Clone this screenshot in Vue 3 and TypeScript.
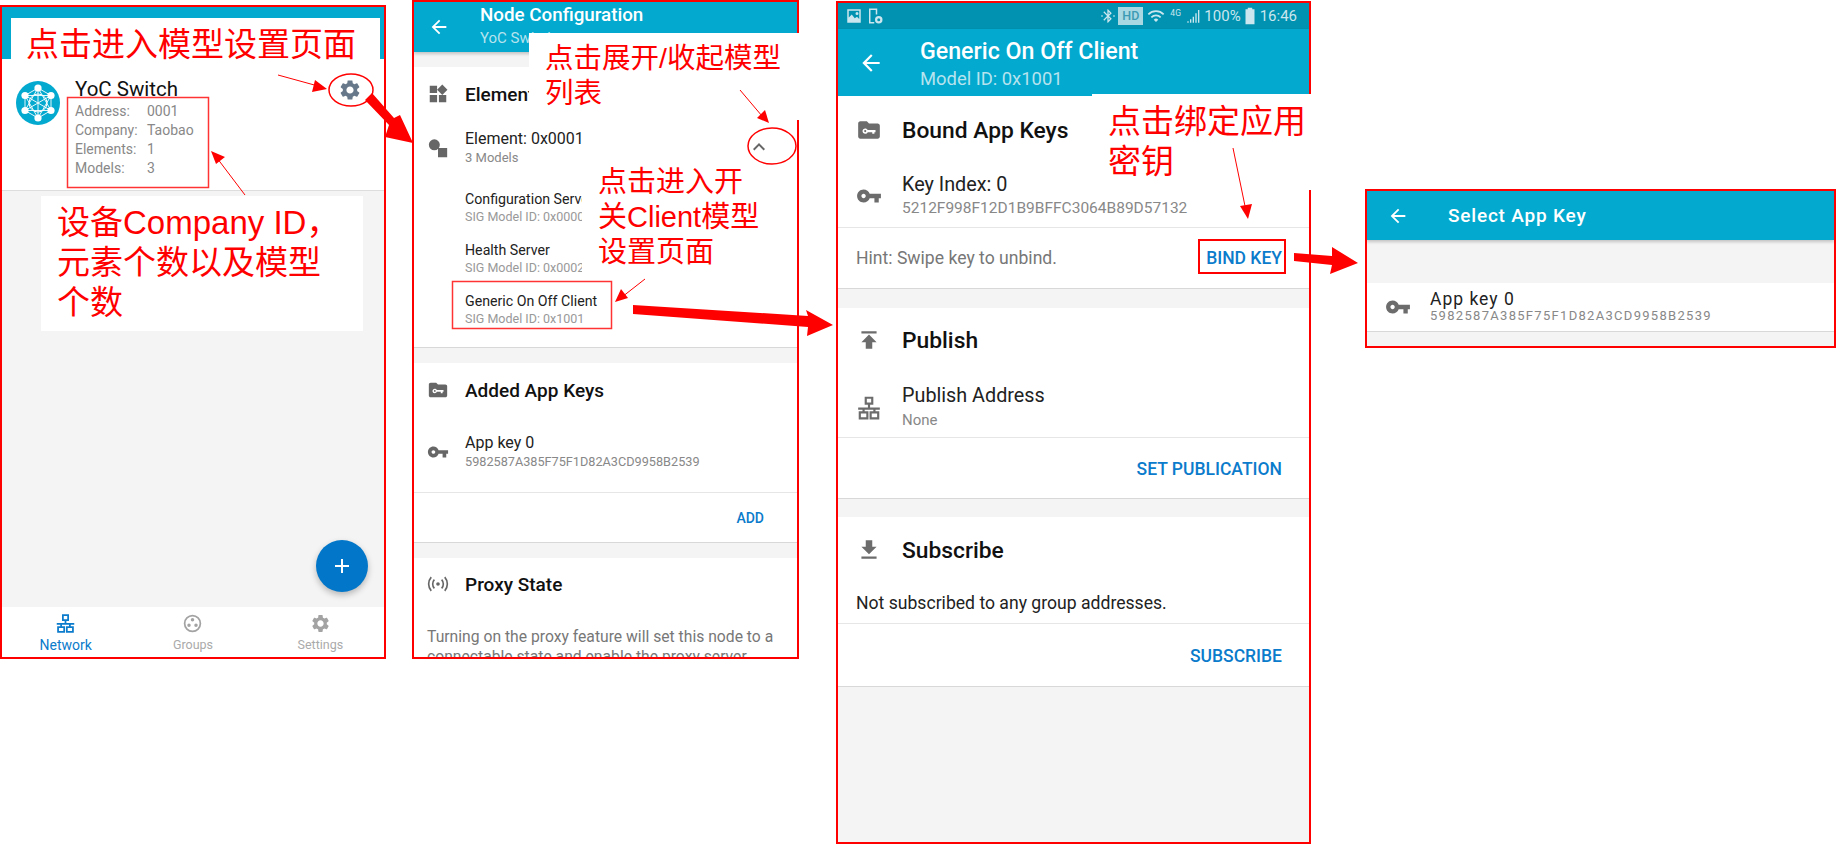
<script setup lang="ts">
const icons: Record<string, string> = {
  back: 'M20 11H7.83l5.59-5.59L12 4l-8 8 8 8 1.41-1.41L7.83 13H20v-2z',
  gear: 'M19.14 12.94c.04-.3.06-.61.06-.94 0-.32-.02-.64-.07-.94l2.03-1.58c.18-.14.23-.41.12-.61l-1.92-3.32c-.12-.22-.37-.29-.59-.22l-2.39.96c-.5-.38-1.03-.7-1.62-.94l-.36-2.54c-.04-.24-.24-.41-.48-.41h-3.84c-.24 0-.43.17-.47.41l-.36 2.54c-.59.24-1.13.57-1.62.94l-2.39-.96c-.22-.08-.47 0-.59.22L2.74 8.87c-.12.21-.08.47.12.61l2.03 1.58c-.05.3-.09.63-.09.94s.02.64.07.94l-2.03 1.58c-.18.14-.23.41-.12.61l1.92 3.32c.12.22.37.29.59.22l2.39-.96c.5.38 1.03.7 1.62.94l.36 2.54c.05.24.24.41.48.41h3.84c.24 0 .44-.17.47-.41l.36-2.54c.59-.24 1.13-.56 1.62-.94l2.39.96c.22.08.47 0 .59-.22l1.92-3.32c.12-.22.07-.47-.12-.61l-2.01-1.58zM12 15.6c-1.98 0-3.6-1.62-3.6-3.6s1.62-3.6 3.6-3.6 3.6 1.62 3.6 3.6-1.62 3.6-3.6 3.6z',
  key: 'M12.65 10C11.83 7.67 9.61 6 7 6c-3.31 0-6 2.69-6 6s2.69 6 6 6c2.61 0 4.83-1.67 5.65-4H17v4h4v-4h2v-4H12.65zM7 14c-1.1 0-2-.9-2-2s.9-2 2-2 2 .9 2 2-.9 2-2 2z',
  folderKey: 'M10 4H4c-1.1 0-2 .9-2 2v12c0 1.1.9 2 2 2h16c1.1 0 2-.9 2-2V8c0-1.1-.9-2-2-2h-8l-2-2zM8.5 10.5c1 0 1.9.6 2.3 1.5H18v2h-1v1.5h-2V14h-4.2c-.4.9-1.3 1.5-2.3 1.5-1.4 0-2.5-1.1-2.5-2.5s1.1-2.5 2.5-2.5zm0 1.5a1 1 0 1 0 0 2 1 1 0 0 0 0-2z',
  widgets: 'M13 13v8h8v-8h-8zM3 21h8v-8H3v8zM3 3v8h8V3H3zm13.66-1.31L11 7.34 16.66 13l5.66-5.66-5.66-5.65z',
  shapes: 'M8 2.5a6 6 0 1 1 0 12 6 6 0 0 1 0-12zM12 12h10v10H12z',
  publish: 'M5 4v2h14V4H5zm0 10h4v6h6v-6h4l-7-7-7 7z',
  download: 'M19 9h-4V3H9v6H5l7 7 7-7zM5 18v2h14v-2H5z',
  chevron: 'M12 8l-6 6 1.41 1.41L12 10.83l4.59 4.58L18 14z',
  network: 'M9 2.5h6v5.5H9zM12 8v4M2 12.5h20M7 12.5V16M17 12.5V16M3.5 16h7v5.5h-7zM13.5 16h7v5.5h-7z',
  groups: 'M12 2a10 10 0 1 1 0 20 10 10 0 0 1 0-20zm0 2a8 8 0 1 0 0 16 8 8 0 0 0 0-16zm0 1.8a2 2 0 1 1 0 4 2 2 0 0 1 0-4zM8 12a2 2 0 1 1 0 4 2 2 0 0 1 0-4zm8 0a2 2 0 1 1 0 4 2 2 0 0 1 0-4z',
  proxy: 'M12 10a2 2 0 1 1 0 4 2 2 0 0 1 0-4zM7.4 6.6l1.3 1.3a6 6 0 0 0 0 8.2l-1.3 1.3a8 8 0 0 1 0-10.8zm9.2 0a8 8 0 0 1 0 10.8l-1.3-1.3a6 6 0 0 0 0-8.2l1.3-1.3zM4 3.8l1.3 1.3a10.5 10.5 0 0 0 0 13.8L4 20.2A12.4 12.4 0 0 1 4 3.8zm16 0a12.4 12.4 0 0 1 0 16.4l-1.3-1.3a10.5 10.5 0 0 0 0-13.8L20 3.8z',
  image: 'M3 3h18v18H3V3zm2 2v9l4-4 4 5 3-2 3 3V5H5zm11 1.5a2 2 0 1 1 0 4 2 2 0 0 1 0-4z',
  file: 'M4 2h11v8h-2V4H6v16h5v2H4V2zm13 10a5 5 0 1 1 0 10 5 5 0 0 1 0-10zm0 3a2 2 0 1 0 0 4 2 2 0 0 0 0-4z',
  bluetooth: 'M11 2h1l5.7 5.7-4.3 4.3 4.3 4.3L12 22h-1v-7.6L6.4 19 5 17.6 10.6 12 5 6.4 6.4 5l4.6 4.6V2zm2 3.8v3.8l1.9-1.9L13 5.8zm0 8.6v3.8l1.9-1.9-1.9-1.9zM2 11h2v2H2v-2zm18 0h2v2h-2v-2z',
  wifi: 'M1 9l1.6 1.6a13.3 13.3 0 0 1 18.8 0L23 9A15.6 15.6 0 0 0 1 9zm4 4l1.6 1.6a7.6 7.6 0 0 1 10.8 0L19 13a9.9 9.9 0 0 0-14 0zm4 4l3 3 3-3a4.2 4.2 0 0 0-6 0z',
  signal: 'M2 20h2v2H2zM6 17h2v5H6zM10 13h2v9h-2zM14 8h2v14h-2zM18 3h2v19h-2z',
  battery: 'M9 1h6v2h3v20H6V3h3V1z',
}

const logoNodes = [
  [22, 7], [35, 14.5], [35, 29.5], [22, 37], [9, 29.5], [9, 14.5],
]
const logoLines = logoNodes.flatMap((a, i) =>
  logoNodes.slice(i + 1).map((b) => [a[0], a[1], b[0], b[1]]),
)

const details = [
  ['Address:', '0001'],
  ['Company:', 'Taobao'],
  ['Elements:', '1'],
  ['Models:', '3'],
]
const models = [
  ['Configuration Server', 'SIG Model ID: 0x0000'],
  ['Health Server', 'SIG Model ID: 0x0002'],
  ['Generic On Off Client', 'SIG Model ID: 0x1001'],
]
const thinArrows = [
  { line: '278,75 318,86', head: '327,89 315,80 312,92' },
  { line: '245,195 217,158', head: '211,151 225,157 216,164' },
  { line: '740,90 762,116', head: '769,123 757,118 765,110' },
  { line: '645,279 622,297', head: '615,302 621,289 628,298' },
  { line: '1233,148 1245,206', head: '1248,219 1240,206 1252,204' },
]
const thickArrows = [
  '365,100 372,93 394,118 400,115 413,143 385,137 389,125',
  '633,305 808,316 806,310 833,325 807,336 808,327 633,314',
  '1294,253 1332,256 1332,247 1358,263 1330,274 1332,265 1294,261',
]
</script>

<template>
  <div class="canvas">
    <section class="phone phone-a">
      <header class="strip"></header>
      <div class="node">
        <svg class="logo" viewBox="0 0 44 44">
          <circle cx="22" cy="22" r="22" fill="#03a9cf" />
          <line v-for="(l, i) in logoLines" :key="i" :x1="l[0]" :y1="l[1]" :x2="l[2]" :y2="l[3]" stroke="#fff" stroke-width="0.9" />
          <circle cx="22" cy="22" r="9" fill="none" stroke="#fff" stroke-width="1" />
          <circle v-for="(n, i) in logoNodes" :key="'n' + i" :cx="n[0]" :cy="n[1]" r="3.6" fill="#fff" />
        </svg>
        <div class="node-text">
          <div class="node-name">YoC Switch</div>
          <div v-for="d in details" :key="d[0]" class="node-line">
            <span class="node-key">{{ d[0] }}</span><span>{{ d[1] }}</span>
          </div>
        </div>
        <svg class="node-gear" viewBox="0 0 24 24"><path :d="icons.gear" /></svg>
      </div>
      <div class="fill">
        <div class="fab">
          <svg viewBox="0 0 24 24"><path d="M11 5h2v6h6v2h-6v6h-2v-6H5v-2h6z" /></svg>
        </div>
      </div>
      <nav class="tabs">
        <div class="tab tab-on">
          <svg viewBox="0 0 24 24"><path class="net" :d="icons.network" /></svg>
          <span>Network</span>
        </div>
        <div class="tab">
          <svg viewBox="0 0 24 24"><path :d="icons.groups" /></svg>
          <span>Groups</span>
        </div>
        <div class="tab">
          <svg viewBox="0 0 24 24"><path :d="icons.gear" /></svg>
          <span>Settings</span>
        </div>
      </nav>
    </section>

    <section class="phone phone-b">
      <header class="bar bar-b">
        <svg class="back" viewBox="0 0 24 24"><path :d="icons.back" /></svg>
        <div>
          <div class="bar-title">Node Configuration</div>
          <div class="bar-sub">YoC Switch</div>
        </div>
      </header>
      <div class="gap-b"></div>
      <div class="card">
        <div class="head-b">
          <svg viewBox="0 0 24 24"><path :d="icons.widgets" /></svg>
          <span>Elements</span>
        </div>
        <div class="row-b el-row">
          <svg viewBox="0 0 24 24"><path :d="icons.shapes" /></svg>
          <div>
            <div class="t-b">Element: 0x0001</div>
            <div class="s-b">3 Models</div>
          </div>
          <svg class="chev" viewBox="0 0 24 24"><path :d="icons.chevron" /></svg>
        </div>
        <div class="model-list">
          <div v-for="m in models" :key="m[0]" class="model">
            <div class="m-t">{{ m[0] }}</div>
            <div class="m-s">{{ m[1] }}</div>
          </div>
        </div>
      </div>
      <div class="gap-b"></div>
      <div class="card">
        <div class="head-b">
          <svg viewBox="0 0 24 24"><path :d="icons.folderKey" /></svg>
          <span>Added App Keys</span>
        </div>
        <div class="row-b key-row">
          <svg viewBox="0 0 24 24"><path :d="icons.key" /></svg>
          <div>
            <div class="t-b">App key 0</div>
            <div class="s-b hash-b">5982587A385F75F1D82A3CD9958B2539</div>
          </div>
        </div>
        <div class="action-b"><span>ADD</span></div>
      </div>
      <div class="gap-b"></div>
      <div class="card card-last">
        <div class="head-b head-proxy">
          <svg viewBox="0 0 24 24"><path :d="icons.proxy" /></svg>
          <span>Proxy State</span>
        </div>
        <p class="proxy-text">Turning on the proxy feature will set this node to a connectable state and enable the proxy server</p>
      </div>
    </section>

    <section class="phone phone-c">
      <div class="status">
        <svg class="st-left" viewBox="0 0 24 24"><path :d="icons.image" /></svg>
        <svg class="st-left" viewBox="0 0 24 24"><path :d="icons.file" /></svg>
        <span class="status-space"></span>
        <svg class="st-bt" viewBox="0 0 24 24"><path :d="icons.bluetooth" /></svg>
        <span class="hd">HD</span>
        <svg class="st-wifi" viewBox="0 0 24 24"><path :d="icons.wifi" /></svg>
        <span class="fourg">4G</span>
        <svg class="st-signal" viewBox="0 0 24 24"><path :d="icons.signal" /></svg>
        <span class="pct">100%</span>
        <svg class="st-batt" viewBox="0 0 24 24"><path :d="icons.battery" /></svg>
        <span class="clock">16:46</span>
      </div>
      <header class="bar bar-c">
        <svg class="back" viewBox="0 0 24 24"><path :d="icons.back" /></svg>
        <div>
          <div class="bar-title">Generic On Off Client</div>
          <div class="bar-sub">Model ID: 0x1001</div>
        </div>
      </header>
      <div class="card">
        <div class="head-c h68">
          <svg viewBox="0 0 24 24"><path :d="icons.folderKey" /></svg>
          <span>Bound App Keys</span>
        </div>
        <div class="row-c bound">
          <svg viewBox="0 0 24 24"><path :d="icons.key" /></svg>
          <div>
            <div class="t-c">Key Index: 0</div>
            <div class="s-c">5212F998F12D1B9BFFC3064B89D57132</div>
          </div>
        </div>
        <div class="action-c a61">
          <span class="hint">Hint: Swipe key to unbind.</span>
          <span class="btn">BIND KEY</span>
        </div>
      </div>
      <div class="gap-c first"></div>
      <div class="card">
        <div class="head-c h64">
          <svg viewBox="0 0 24 24"><path :d="icons.publish" /></svg>
          <span>Publish</span>
        </div>
        <div class="row-c pub">
          <svg viewBox="0 0 24 24"><path class="net" :d="icons.network" /></svg>
          <div>
            <div class="t-c">Publish Address</div>
            <div class="none">None</div>
          </div>
        </div>
        <div class="action-c a62"><span class="btn">SET PUBLICATION</span></div>
      </div>
      <div class="gap-c"></div>
      <div class="card">
        <div class="head-c h66">
          <svg viewBox="0 0 24 24"><path :d="icons.download" /></svg>
          <span>Subscribe</span>
        </div>
        <div class="plain">Not subscribed to any group addresses.</div>
        <div class="action-c a63"><span class="btn">SUBSCRIBE</span></div>
      </div>
      <div class="rest"></div>
    </section>

    <section class="phone phone-d">
      <header class="bar bar-d">
        <svg class="back" viewBox="0 0 24 24"><path :d="icons.back" /></svg>
        <div class="bar-title">Select App Key</div>
      </header>
      <div class="gap-d"></div>
      <div class="card pick">
        <svg viewBox="0 0 24 24"><path :d="icons.key" /></svg>
        <div>
          <div class="pick-t">App key 0</div>
          <div class="pick-s">5982587A385F75F1D82A3CD9958B2539</div>
        </div>
      </div>
      <div class="rest"></div>
    </section>

    <div class="note note-1">点击进入模型设置页面</div>
    <div class="note note-2">设备Company ID，<br />元素个数以及模型<br />个数</div>
    <div class="note note-3">点击展开/收起模型<br />列表</div>
    <div class="note note-4">点击进入开<br />关Client模型<br />设置页面</div>
    <div class="note note-5">点击绑定应用<br />密钥</div>

    <svg class="marks" viewBox="0 0 1836 844" fill="none">
      <ellipse cx="351" cy="90" rx="22" ry="16" stroke="#f00" stroke-width="1.5" />
      <ellipse cx="772" cy="146" rx="24" ry="18" stroke="#f00" stroke-width="1.5" />
      <rect x="67.5" y="97.5" width="141" height="90" stroke="#f33" stroke-width="1.5" />
      <rect x="452.5" y="281.5" width="159" height="47" stroke="#f33" stroke-width="1.5" />
      <rect x="1199" y="240" width="86" height="33" stroke="#f00" stroke-width="2" />
      <g v-for="a in thinArrows" :key="a.line">
        <polyline :points="a.line" stroke="#f00" stroke-width="1" />
        <polygon :points="a.head" fill="#f00" />
      </g>
      <polygon v-for="a in thickArrows" :key="a" :points="a" fill="#f00" />
    </svg>
  </div>
</template>

<style>
html,
body {
  margin: 0;
  background: #fff;
}
</style>

<style scoped>
.canvas {
  position: relative;
  display: flex;
  align-items: flex-start;
  width: 1836px;
  height: 844px;
  overflow: hidden;
  background: #fff;
  font-family: Roboto, "Noto Sans CJK SC", sans-serif;
  color: #111;
}
.phone {
  display: flex;
  flex-direction: column;
  flex: none;
  box-sizing: border-box;
  overflow: hidden;
  border: 2px solid #f00;
  background: #f4f4f4;
}
.phone-a {
  width: 386px;
  height: 654px;
  margin-top: 5px;
}
.phone-b {
  width: 387px;
  height: 659px;
  margin-left: 26px;
}
.phone-c {
  width: 475px;
  height: 843px;
  margin-top: 1px;
  margin-left: 37px;
}
.phone-d {
  width: 471px;
  height: 159px;
  margin-top: 189px;
  margin-left: 54px;
}
.net {
  fill: none;
  stroke: currentColor;
  stroke-width: 2;
}

/* first phone */
.strip {
  height: 52px;
  flex: none;
  background: #03a9cf;
}
.node {
  position: relative;
  display: flex;
  flex: none;
  box-sizing: border-box;
  height: 132px;
  padding: 18px 0 0 14px;
  background: #fff;
  border-bottom: 1px solid #ddd;
}
.logo {
  width: 44px;
  height: 44px;
  margin: 4px 15px 0 0;
}
.node-name {
  height: 25px;
  font-size: 20.5px;
  line-height: 24px;
}
.node-line {
  display: flex;
  font-size: 14px;
  line-height: 19px;
  color: #888;
}
.node-key {
  width: 72px;
}
.node-gear {
  position: absolute;
  top: 19px;
  left: 336px;
  width: 24px;
  height: 24px;
  fill: #667889;
}
.fill {
  position: relative;
  flex: 1;
}
.fab {
  position: absolute;
  top: 349px;
  left: 314px;
  display: flex;
  align-items: center;
  justify-content: center;
  width: 52px;
  height: 52px;
  border-radius: 50%;
  background: #0277c9;
  box-shadow: 0 3px 6px rgba(0, 0, 0, 0.25);
}
.fab svg {
  width: 24px;
  height: 24px;
  fill: #fff;
}
.tabs {
  display: grid;
  flex: none;
  grid-template-columns: repeat(3, 1fr);
  height: 50px;
  background: #fff;
}
.tab {
  display: flex;
  flex-direction: column;
  align-items: center;
  padding-top: 6px;
  font-size: 12.5px;
  line-height: 16px;
  color: #aaa;
}
.tab svg {
  width: 21px;
  height: 21px;
  margin-bottom: 3px;
  fill: #a3a3a3;
}
.tab-on {
  font-size: 14px;
  color: #0b7bcb;
}

/* shared */
.bar {
  display: flex;
  flex: none;
  align-items: center;
  background: #03a9cf;
  color: #fff;
  box-shadow: 0 2px 3px rgba(0, 0, 0, 0.2);
}
.back {
  flex: none;
  fill: #fff;
}
.bar-title {
  font-weight: 500;
}
.bar-sub {
  color: #b6e3ee;
}
.card {
  flex: none;
  background: #fff;
  border-bottom: 1px solid #d8d8d8;
  box-sizing: border-box;
}
.rest {
  flex: 1;
}

/* second phone */
.bar-b {
  height: 50px;
  padding-left: 14px;
}
.bar-b .back {
  width: 22px;
  height: 22px;
  margin-right: 30px;
}
.bar-b .bar-title {
  margin-top: -4px;
  font-size: 18.8px;
  line-height: 26px;
}
.bar-b .bar-sub {
  font-size: 15px;
  line-height: 20px;
}
.gap-b {
  height: 15px;
  flex: none;
}
.head-b {
  display: flex;
  align-items: center;
  height: 54px;
  font-size: 19px;
  font-weight: 500;
}
.head-b svg,
.row-b svg {
  flex: none;
  width: 22px;
  height: 22px;
  margin: 0 16px 0 13px;
  fill: #666;
}
.head-proxy {
  height: 52px;
}
.row-b {
  display: flex;
  align-items: center;
}
.el-row {
  position: relative;
  padding-top: 8px;
}
.chev {
  position: absolute;
  top: 14px;
  left: 333px;
  width: 24px !important;
  height: 24px !important;
  margin: 0 !important;
}
.t-b {
  font-size: 16px;
  line-height: 20px;
  color: #222;
}
.s-b {
  font-size: 13px;
  line-height: 18px;
  color: #888;
}
.hash-b {
  font-size: 12.7px;
}
.model-list {
  display: flex;
  flex-direction: column;
  gap: 15px;
  padding: 23px 0 19px 51px;
}
.m-t {
  font-size: 14.2px;
  line-height: 18px;
  color: #222;
}
.m-s {
  font-size: 12.5px;
  line-height: 18px;
  color: #999;
}
.key-row {
  padding: 16px 0 21px;
  border-bottom: 1px solid #e6e6e6;
}
.action-b {
  display: flex;
  justify-content: flex-end;
  align-items: center;
  height: 49px;
  padding-right: 33px;
  font-size: 14px;
  font-weight: 500;
  color: #0b7bcb;
}
.card-last {
  flex: 1;
  border: 0;
}
.proxy-text {
  margin: 0;
  padding: 17px 10px 0 13px;
  font-size: 15.7px;
  line-height: 20px;
  color: #777;
}

/* third phone */
.status {
  display: flex;
  flex: none;
  align-items: center;
  height: 26px;
  padding: 0 12px 0 7px;
  background: #0092b0;
  color: #cbe6ee;
  font-size: 15px;
}
.status svg {
  flex: none;
  fill: #cbe6ee;
}
.status-space {
  flex: 1;
}
.st-left {
  width: 18px;
  height: 18px;
  margin-right: 3px;
}
.st-bt {
  width: 16px;
  height: 16px;
  margin-right: 2px;
}
.hd {
  box-sizing: border-box;
  width: 25px;
  height: 18px;
  margin-right: 4px;
  font-size: 12.5px;
  line-height: 18px;
  text-align: center;
  font-weight: 500;
  background: #a9d8e3;
  color: #3d9ab3;
}
.st-wifi {
  width: 18px;
  height: 18px;
  margin-right: 5px;
}
.fourg {
  align-self: flex-start;
  width: 11px;
  margin: 5px 5px 0 0;
  font-size: 8.5px;
}
.st-signal {
  width: 16px;
  height: 16px;
  margin-right: 2px;
}
.st-batt {
  width: 18px;
  height: 18px;
  margin-right: 1px;
}
.bar-c {
  height: 67px;
  padding-left: 20px;
}
.bar-c .back {
  width: 26px;
  height: 26px;
  margin-right: 36px;
}
.bar-c .bar-title {
  font-size: 23.2px;
  line-height: 32px;
}
.bar-c .bar-sub {
  font-size: 18.4px;
  line-height: 24px;
}
.head-c {
  display: flex;
  align-items: center;
  font-size: 22.8px;
  font-weight: 500;
}
.head-c svg,
.row-c svg {
  flex: none;
  width: 26px;
  height: 26px;
  margin: 0 20px 0 18px;
  fill: #6c6c6c;
  color: #6c6c6c;
}
.h68 {
  height: 68px;
}
.h64 {
  height: 64px;
}
.h66 {
  height: 66px;
}
.row-c {
  display: flex;
  align-items: center;
  border-bottom: 1px solid #e6e6e6;
}
.bound {
  padding: 9px 0 8px;
}
.pub {
  padding: 12px 0 5px;
}
.t-c {
  font-size: 19.8px;
  line-height: 24px;
  color: #222;
}
.s-c {
  font-size: 15.5px;
  line-height: 22px;
  color: #888;
}
.none {
  font-size: 15px;
  line-height: 24px;
  color: #888;
}
.action-c {
  display: flex;
  align-items: center;
  justify-content: flex-end;
  box-sizing: border-box;
  padding: 0 27px 0 18px;
}
.a61 {
  height: 60px;
}
.a62 {
  height: 60px;
  padding-top: 2px;
}
.a63 {
  height: 62px;
  padding-top: 2px;
}
.hint {
  margin-right: auto;
  font-size: 17.6px;
  color: #777;
}
.btn {
  font-size: 17.5px;
  font-weight: 500;
  color: #0b7bcb;
}
.gap-c {
  flex: none;
  height: 18px;
}
.gap-c.first {
  height: 19px;
}
.plain {
  padding: 8px 0 8px 18px;
  font-size: 17.6px;
  line-height: 24px;
  color: #222;
  border-bottom: 1px solid #e6e6e6;
}

/* fourth phone */
.bar-d {
  height: 49px;
  padding-left: 20px;
}
.bar-d .back {
  width: 22px;
  height: 22px;
  margin-right: 39px;
}
.bar-d .bar-title {
  font-size: 19px;
  letter-spacing: 0.8px;
}
.gap-d {
  flex: none;
  height: 43px;
}
.pick {
  display: flex;
  align-items: center;
  height: 49px;
}
.pick svg {
  flex: none;
  width: 26px;
  height: 26px;
  margin: 0 19px 0 18px;
  fill: #6c6c6c;
}
.pick-t {
  font-size: 17.5px;
  line-height: 18px;
  letter-spacing: 1px;
  color: #222;
}
.pick-s {
  font-size: 13px;
  line-height: 16px;
  letter-spacing: 1.3px;
  color: #888;
}

/* annotations laid over the screenshots */
.note {
  position: absolute;
  box-sizing: border-box;
  background: #fff;
  color: #f00;
  font-family: "Liberation Sans", "Noto Sans CJK SC", sans-serif;
  white-space: nowrap;
}
.note-1 {
  top: 18px;
  left: 11px;
  width: 369px;
  height: 47px;
  padding: 7px 0 0 15px;
  font-size: 33px;
  line-height: 40px;
}
.note-2 {
  top: 196px;
  left: 41px;
  width: 322px;
  height: 135px;
  padding: 7px 0 0 16px;
  font-size: 33px;
  line-height: 40px;
}
.note-3 {
  top: 33px;
  left: 529px;
  width: 270px;
  height: 87px;
  padding: 8px 0 0 16px;
  font-size: 28.5px;
  line-height: 35px;
}
.note-4 {
  top: 165px;
  left: 582px;
  width: 180px;
  height: 107px;
  padding-left: 16px;
  font-size: 29px;
  line-height: 35px;
}
.note-5 {
  top: 94px;
  left: 1092px;
  width: 219px;
  height: 96px;
  padding: 8px 0 0 16px;
  font-size: 33px;
  line-height: 40px;
}
.marks {
  position: absolute;
  inset: 0;
  width: 1836px;
  height: 844px;
  pointer-events: none;
}
</style>
